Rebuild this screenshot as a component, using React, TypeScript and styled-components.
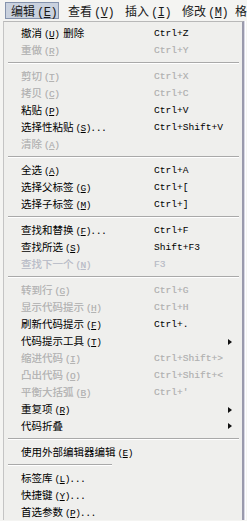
import React from "react";
import styled, { createGlobalStyle } from "styled-components";

const GlobalStyle = createGlobalStyle`
  html, body {
    margin: 0;
    padding: 0;
    background: #f4f4f2;
    overflow: hidden;
  }
  body {
    font-family: "Noto Sans CJK SC", "DejaVu Sans", sans-serif;
  }
`;

const Page = styled.div`
  width: 247px;
  height: 521px;
  overflow: hidden;
  background: #f4f4f2;
`;

const MenuBar = styled.div`
  display: flex;
  align-items: center;
  gap: 3px;
  height: 21px;
  padding-left: 5px;
  box-sizing: border-box;
  white-space: nowrap;
`;

const BarItem = styled.div<{ $active?: boolean; $last?: boolean }>`
  flex: none;
  width: ${(p) => (p.$last ? "14px" : "54px")};
  height: 17px;
  line-height: 15px;
  padding: 0 0 0 ${(p) => (p.$last ? "1px" : "5px")};
  box-sizing: border-box;
  font-size: 12px;
  color: #1a1a1a;
  border: 1px solid ${(p) => (p.$active ? "#8593ad" : "transparent")};
  background: ${(p) => (p.$active ? "#c9d1de" : "transparent")};
  u {
    text-decoration: underline;
    text-underline-offset: 1px;
  }
`;

const Mn = styled.span`
  margin-left: 2px;
  font-family: "Liberation Mono", "Noto Sans CJK SC", monospace;
  letter-spacing: -0.5px;
`;

const Dropdown = styled.div`
  margin-left: 3px;
  width: 241px;
  box-sizing: border-box;
  background: #efefed;
  border-top: 1px solid #b8b8b8;
  border-left: 1px solid #c4c4c4;
  border-right: 2px solid #9a9aac;
  box-shadow: 1px 0 0 #d8d8e4, 2px 0 0 #ffffff;
  padding: 2px 0 0;
`;

const Row = styled.div<{ $disabled?: boolean; $faint?: boolean }>`
  display: grid;
  grid-template-columns: 133px 1fr 14px;
  align-items: center;
  height: 17px;
  padding-left: 17px;
  color: ${(p) => (p.$faint ? "#b9bdca" : p.$disabled ? "#b3b3b3" : "#000000")};
  text-shadow: ${(p) => (p.$disabled || p.$faint ? "0 0 0.6px #c8c8c8" : "none")};
`;

const Label = styled.span`
  font-size: 10.5px;
  line-height: 17px;
  white-space: nowrap;
  u {
    text-decoration: underline;
    text-underline-offset: 1px;
  }
`;

const Key = styled.span`
  margin-left: 2px;
  font-family: "Liberation Mono", "Noto Sans CJK SC", monospace;
  font-size: 9.5px;
  letter-spacing: -0.6px;
`;

const Dots = styled.span`
  letter-spacing: 2.4px;
  margin-left: 1px;
`;

const Tail = styled.span`
  margin-left: 4px;
`;

const Shortcut = styled.span`
  font-family: "Liberation Mono", "DejaVu Sans Mono", monospace;
  font-size: 9.6px;
  line-height: 17px;
  white-space: nowrap;
`;

const Arrow = styled.span`
  width: 0;
  height: 0;
  border-top: 3.5px solid transparent;
  border-bottom: 3.5px solid transparent;
  border-left: 4px solid #111;
  justify-self: start;
`;

const Sep = styled.div<{ $short?: boolean }>`
  height: 9px;
  display: flex;
  align-items: center;
  padding: 0 3px 0 4px;
  &::after {
    content: "";
    display: block;
    width: ${(p) => (p.$short ? "104px" : "100%")};
    height: 0;
    border-top: 1px solid #a9a9a9;
    border-bottom: 1px solid #ffffff;
  }
`;

type Item =
  | { sep: true; short?: boolean }
  | {
      sep?: false;
      text: string;
      key?: string;
      tail?: string;
      dots?: boolean;
      sc?: string;
      sub?: boolean;
      disabled?: boolean;
      faint?: boolean;
    };

const items: Item[] = [
  { text: "撤消", key: "U", tail: "删除", sc: "Ctrl+Z" },
  { text: "重做", key: "R", sc: "Ctrl+Y", disabled: true },
  { sep: true },
  { text: "剪切", key: "T", sc: "Ctrl+X", disabled: true },
  { text: "拷贝", key: "C", sc: "Ctrl+C", disabled: true },
  { text: "粘贴", key: "P", sc: "Ctrl+V" },
  { text: "选择性粘贴", key: "S", dots: true, sc: "Ctrl+Shift+V" },
  { text: "清除", key: "A", disabled: true },
  { sep: true },
  { text: "全选", key: "A", sc: "Ctrl+A" },
  { text: "选择父标签", key: "G", sc: "Ctrl+[" },
  { text: "选择子标签", key: "M", sc: "Ctrl+]" },
  { sep: true },
  { text: "查找和替换", key: "F", dots: true, sc: "Ctrl+F" },
  { text: "查找所选", key: "S", sc: "Shift+F3" },
  { text: "查找下一个", key: "N", sc: "F3", faint: true },
  { sep: true },
  { text: "转到行", key: "G", sc: "Ctrl+G", disabled: true },
  { text: "显示代码提示", key: "H", sc: "Ctrl+H", disabled: true },
  { text: "刷新代码提示", key: "F", sc: "Ctrl+." },
  { text: "代码提示工具", key: "T", sub: true },
  { text: "缩进代码", key: "I", sc: "Ctrl+Shift+>", disabled: true },
  { text: "凸出代码", key: "O", sc: "Ctrl+Shift+<", disabled: true },
  { text: "平衡大括弧", key: "B", sc: "Ctrl+'", disabled: true },
  { text: "重复项", key: "R", sub: true },
  { text: "代码折叠", sub: true },
  { sep: true },
  { text: "使用外部编辑器编辑", key: "E" },
  { sep: true, short: true },
  { text: "标签库", key: "L", dots: true },
  { text: "快捷键", key: "Y", dots: true },
  { text: "首选参数", key: "P", dots: true },
];

const bar = [
  { t: "编辑", k: "E", active: true },
  { t: "查看", k: "V" },
  { t: "插入", k: "I" },
  { t: "修改", k: "M" },
];

export default function App() {
  return (
    <Page>
      <GlobalStyle />
      <MenuBar>
        {bar.map((b) => (
          <BarItem key={b.t} $active={b.active}>
            {b.t}
            <Mn>
              (<u>{b.k}</u>)
            </Mn>
          </BarItem>
        ))}
        <BarItem $last>格</BarItem>
      </MenuBar>
      <Dropdown>
        {items.map((it, i) =>
          it.sep ? (
            <Sep key={i} $short={it.short} />
          ) : (
            <Row key={i} $disabled={it.disabled} $faint={it.faint}>
              <Label>
                {it.text}
                {it.key ? (
                  <Key>
                    (<u>{it.key}</u>)
                  </Key>
                ) : null}
                {it.tail ? <Tail>{it.tail}</Tail> : null}
                {it.dots ? <Dots>...</Dots> : null}
              </Label>
              <Shortcut>{it.sc ?? ""}</Shortcut>
              {it.sub ? <Arrow /> : <span />}
            </Row>
          )
        )}
      </Dropdown>
    </Page>
  );
}
